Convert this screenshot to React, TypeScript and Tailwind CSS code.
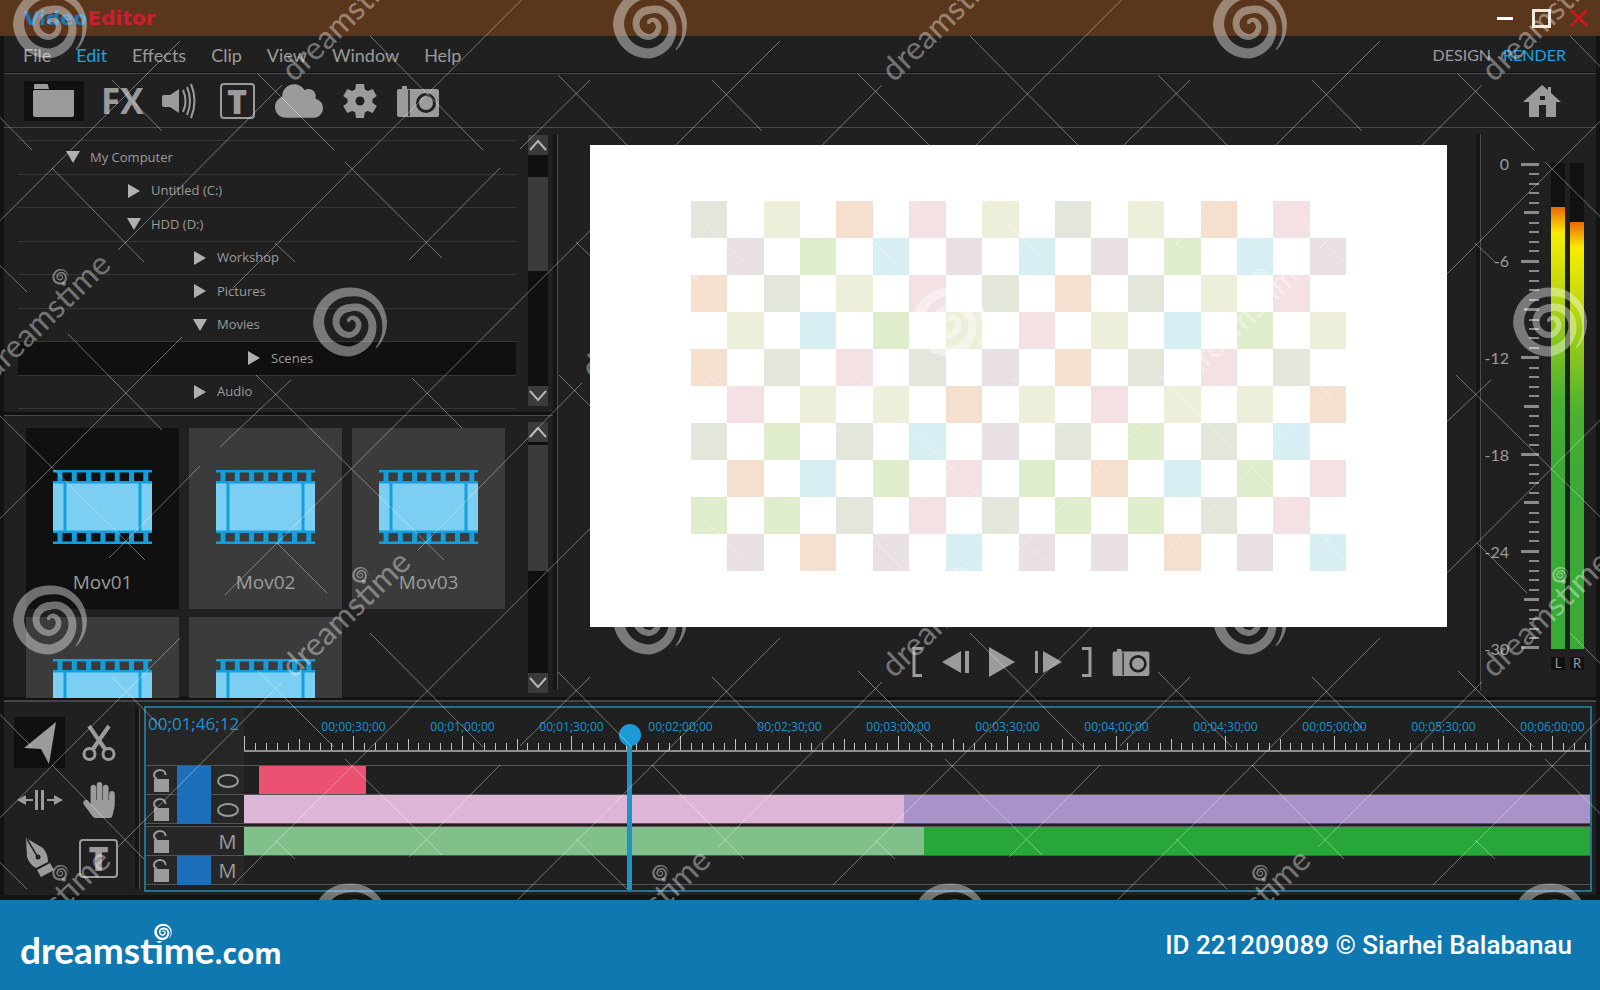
import { ReactNode } from "react";
import { FaCloud, FaHandPaper } from "react-icons/fa";

type Dir = "up" | "down";

const menu = ["File", "Edit", "Effects", "Clip", "View", "Window", "Help"];

const tree = [
  { label: "My Computer", pad: "pl-12", open: true },
  { label: "Untitled (C:)", pad: "pl-[109px]" },
  { label: "HDD (D:)", pad: "pl-[109px]", open: true },
  { label: "Workshop", pad: "pl-[175px]" },
  { label: "Pictures", pad: "pl-[175px]" },
  { label: "Movies", pad: "pl-[175px]", open: true },
  { label: "Scenes", pad: "pl-[229px]", active: true },
  { label: "Audio", pad: "pl-[175px]" },
];

const clips = ["Mov01", "Mov02", "Mov03", "", ""];

const swatch: Record<string, string> = {
  G: "bg-[#e3e6db]",
  Y: "bg-[#eeefdb]",
  O: "bg-[#f5e0cf]",
  P: "bg-[#f4e1e3]",
  M: "bg-[#e9e0e4]",
  L: "bg-[#e0edcc]",
  C: "bg-[#d7eff2]",
};

const board = [
  "GYOPYGYOP",
  "MLCMCMLCM",
  "OGYPGOGYP",
  "YCLYPYCLY",
  "OGPGMOGPG",
  "PYYOYPYYO",
  "GLGCMGLGC",
  "OCLPLOCLP",
  "LLGPGLLGP",
  "MOMCMMOMC",
];

const times = [
  "00;00;30;00",
  "00;01;00;00",
  "00;01;30;00",
  "00;02;00;00",
  "00;02;30;00",
  "00;03;00;00",
  "00;03;30;00",
  "00;04;00;00",
  "00;04;30;00",
  "00;05;00;00",
  "00;05;30;00",
  "00;06;00;00",
];

const levels = ["0", "-6", "-12", "-18", "-24", "-30"];

const range = (n: number) => Array.from({ length: n }, (_, i) => i);

// centre-line radius and width of the swirl, one entry per quarter turn
const swirl = [
  [34.5, 5], [30, 9], [31.5, 11], [29.5, 10], [22, 8], [14, 8], [14, 7], [13, 6], [8, 6], [3, 5], [1, 3],
];

function swirlPath() {
  const outer: string[] = [];
  const inner: string[] = [];
  for (let t = -0.5; t <= 10; t += 0.1) {
    const k = Math.max(0, Math.min(9, Math.floor(t)));
    const f = t - k;
    const r = swirl[k][0] + (swirl[k + 1][0] - swirl[k][0]) * f;
    const w = t < 0 ? 5 + t * 8 : swirl[k][1] + (swirl[k + 1][1] - swirl[k][1]) * f;
    const a = (-t * Math.PI) / 2;
    outer.push(`${((r + w / 2) * Math.cos(a)).toFixed(1)} ${((r + w / 2) * Math.sin(a)).toFixed(1)}`);
    inner.unshift(`${((r - w / 2) * Math.cos(a)).toFixed(1)} ${((r - w / 2) * Math.sin(a)).toFixed(1)}`);
  }
  return `M${outer.join("L")}L${inner.join("L")}Z`;
}

const SWIRL = swirlPath();

const hatch =
  "M225 595L780 41M233 885L782 337M118 250L282 85M409 260L500 168M520 149L590 80M418 550L582 383M109 558L200 466M220 447L291 380" +
  "M112 80L162 131M258 74L334 150M370 36L483 150M-42 75L32 150M52 168L144 262M345 162L442 258M275 243L295 262M-24 242L27 292" +
  "M68 334L162 430M256 375L444 560M412 378L462 428M559 375L745 560M277 543L327 593";

function Overlay() {
  return (
    <svg className="pointer-events-none absolute inset-0 h-full w-full" aria-hidden="true">
      {range(5).map((c) =>
        range(4).map((r) => (
          <path key={`${c}-${r}`} d={hatch} transform={`translate(${(c - 1) * 600} ${(r - 1) * 597})`} stroke="#fff" strokeOpacity=".38" fill="none" />
        ))
      )}
      {range(8).map((c) =>
        range(4)
          .filter((r) => (c + r) % 2 === 1)
          .map((r) => (
            <g key={`${c}-${r}`} transform={`translate(${(c - 1) * 300 + 50} ${r * 298 + 24})`} fill="#fff" fillOpacity=".4">
              <path d={SWIRL} />
              <g transform="translate(244 59) rotate(-44)">
                <text fontSize="32" className="font-['Lato',sans-serif]">dreamstime</text>
                <path d={SWIRL} transform="translate(120 -29) scale(.22)" />
              </g>
            </g>
          ))
      )}
    </svg>
  );
}

function Camera({ className }: { className: string }) {
  return (
    <svg viewBox="0 0 42 32" className={className} fill="currentColor">
      <path d="M2 4h3V1h5v3h30q2 0 2 2v24q0 2-2 2H2q-2 0-2-2V6q0-2 2-2z" />
      <path d="M12 5v26" stroke="#202020" strokeWidth="1.5" />
      <circle cx="29" cy="18" r="8.5" fill="none" stroke="#202020" strokeWidth="3" />
    </svg>
  );
}

function TextBox({ className }: { className: string }) {
  return (
    <span className={`flex items-center justify-center rounded-sm border-2 border-[#9b9b9b] font-['Open_Sans',sans-serif] font-extrabold leading-none ${className}`}>
      T
    </span>
  );
}

function Film() {
  return (
    <svg viewBox="0 0 99 74" className="h-[74px] w-[99px] shrink-0">
      <path d="M0 12h99v50H0z" fill="#7ccff2" />
      <path d="M0 0h99v2.500H0zM0 11h99v2.500H0zM0 60.500h99v2.500H0zM0 71.500h99v2.500H0zM10.500 12h3v50h-3zM85.500 12h3v50h-3z" fill="#129fdb" />
      {range(7).map((i) => (
        <path key={i} d={`M${4.5 + i * 14.3} 1h5v11h-5zM${4.5 + i * 14.3} 61h5v12h-5z`} fill="#129fdb" />
      ))}
    </svg>
  );
}

function Lock() {
  return (
    <svg viewBox="0 0 16 23" className="h-[23px] w-4 text-[#9b9b9b]" fill="none">
      <path d="M1 10h15v13H1z" fill="currentColor" />
      <path d="M4 10C1.500 9 1 8 1 6C1 3 4 1 7 1s5.500 2 5.500 5" stroke="currentColor" strokeWidth="2" />
    </svg>
  );
}

function ScrollButton({ dir }: { dir: Dir }) {
  return (
    <button aria-label={`Scroll ${dir}`} className="flex h-5 w-5 shrink-0 items-center justify-center bg-[#3a3a3a]">
      <svg viewBox="0 0 18 12" className="h-3 w-[18px]" fill="none" stroke="#b5b5b5" strokeWidth="2">
        <path d={dir === "up" ? "M1 11l8-9 8 9" : "M1 1l8 9 8-9"} />
      </svg>
    </button>
  );
}

function Scrollbar({ thumb }: { thumb: string }) {
  return (
    <div className="flex w-5 flex-col bg-[#101010]">
      <ScrollButton dir="up" />
      <div className="flex-1">
        <div className={`bg-[#3b3b3b] ${thumb}`} />
      </div>
      <ScrollButton dir="down" />
    </div>
  );
}

function TitleBar() {
  return (
    <header className="flex h-9 items-center justify-between bg-[#5a371c] pl-6 pr-3">
      <h1 className="font-['DejaVu_Sans',sans-serif] text-xl font-bold leading-none text-[#1d75bc]">
        Video<span className="text-[#cb1f30]">Editor</span>
      </h1>
      <div className="flex items-center gap-[19px]">
        <button aria-label="Minimize" className="h-[3px] w-4 bg-white" />
        <button aria-label="Maximize" className="h-[19px] w-[19px] border-[3px] border-[#f0e8e0]" />
        <button aria-label="Close" className="text-[#d3151c]">
          <svg viewBox="0 0 18 18" className="h-[18px] w-[18px]" stroke="currentColor" strokeWidth="2.5">
            <path d="M1 1l16 16M17 1L1 17" />
          </svg>
        </button>
      </div>
    </header>
  );
}

function MenuBar() {
  return (
    <nav className="flex h-[37px] items-center justify-between pl-[19px] pr-5 font-['Lato',sans-serif] text-lg leading-none shadow-[inset_0_-1px_0_#101010]">
      <div className="flex gap-[25px]">
        {menu.map((m) => (
          <a key={m} href="#" className={m === "Edit" ? "text-[#1aa0e3]" : ""}>{m}</a>
        ))}
      </div>
      <div className="flex gap-3 pr-[10px] text-base leading-none">
        <a href="#">DESIGN</a>
        <a href="#" className="text-[#1aa0e3]">RENDER</a>
      </div>
    </nav>
  );
}

function Toolbar() {
  return (
    <div className="flex h-[55px] items-center border-y border-[#4a4a4a] pl-5 pr-[35px]">
      <button aria-label="Files" className="flex h-10 w-[60px] items-center justify-center bg-[#101010]">
        <svg viewBox="0 0 42 33" className="h-[33px] w-[42px]" fill="currentColor">
          <path d="M1 5V1q0-1 1-1h12q1 0 1 1l1 4zM1 6h40v25q0 2-2 2H2q-2 0-2-2V7z" />
        </svg>
      </button>
      <button className="ml-[17px] font-['Open_Sans',sans-serif] text-[35px] font-bold leading-none">FX</button>
      <button aria-label="Sound" className="ml-[18px]">
        <svg viewBox="0 0 34 36" className="h-9 w-[34px]" fill="currentColor">
          <path d="M0 14q0-2 2-2h6l9-6v24l-9-6H2q-2 0-2-2z" />
          <path d="M21 7q5 11 0 22M25 4q6 14 0 28M29 1q7 17 0 34" fill="none" stroke="currentColor" strokeWidth="2" />
        </svg>
      </button>
      <button aria-label="Text" className="ml-6">
        <TextBox className="h-9 w-[35px] text-[34px]" />
      </button>
      <button aria-label="Cloud" className="ml-5">
        <FaCloud className="h-12 w-12" />
      </button>
      <button aria-label="Settings" className="ml-5">
        <svg viewBox="-17 -17 34 34" className="h-[34px] w-[34px]" fill="currentColor">
          {range(6).map((i) => (
            <path key={i} d="M-4-17h8l1 7H-5z" transform={`rotate(${i * 60})`} />
          ))}
          <circle r="12.5" />
          <circle r="4.5" fill="#202020" />
        </svg>
      </button>
      <button aria-label="Snapshot" className="ml-5">
        <Camera className="h-8 w-[42px]" />
      </button>
      <button aria-label="Home" className="ml-auto">
        <svg viewBox="0 0 38 32" className="h-8 w-[38px]" fill="currentColor">
          <path fillRule="evenodd" d="M19 0l6 5V2h3v6l10 9h-5v15H23V20h-7v12H6V17H0zM17 11v4h5v-4z" />
        </svg>
      </button>
    </div>
  );
}

function Tree() {
  return (
    <div className="flex h-[288px] justify-between border-b border-[#4a4a4a] pb-[9px] pl-[14px] pr-[5px] pt-[7px] shadow-[inset_0_-3px_0_#111]">
      <ul className="mt-[5px] flex h-[269px] w-[498px] flex-col border-t border-[#363636] font-['Open_Sans',sans-serif] text-[13px]">
        {tree.map((t) => (
          <li key={t.label} className={`flex flex-1 border-b border-[#363636] ${t.active ? "bg-[#101010]" : ""}`}>
            <button className={`flex w-full items-center gap-[10px] ${t.pad}`}>
              <svg viewBox="0 0 14 14" className="h-[14px] w-[14px]" fill="#b0b0b0">
                <path d={t.open ? "M0 1h14L7 13z" : "M1 0v14l12-7z"} />
              </svg>
              {t.label}
            </button>
          </li>
        ))}
      </ul>
      <Scrollbar thumb="mt-[22px] h-[94px]" />
    </div>
  );
}

function Bin() {
  return (
    <div className="flex h-[280px] justify-between pl-[22px] pr-[5px]">
      <div className="mt-3 grid h-[270px] grid-cols-3 content-start gap-x-[10px] gap-y-2 overflow-hidden font-['Open_Sans',sans-serif] text-[19px]">
        {clips.map((c, i) => (
          <button key={i} aria-label={c || "Untitled clip"} className={`flex h-[181px] w-[153px] flex-col items-center justify-start pt-[42px] ${i === 0 ? "bg-[#101010]" : "bg-[#3b3b3b]"}`}>
            <Film />
            <span className="mt-6">{c}</span>
          </button>
        ))}
      </div>
      <div className="flex pb-[3px] pt-[6px]">
        <Scrollbar thumb="mt-[3px] h-[126px]" />
      </div>
    </div>
  );
}

function Preview() {
  return (
    <section className="flex flex-1 flex-col items-center pl-8 pr-[29px] pt-[17px]">
      <div className="flex h-[482px] w-full items-center justify-center bg-white">
        <div className="w-[76.5%]">
          {board.map((row, r) => (
            <div key={r} className="grid h-[37px] grid-cols-18">
              {range(18).map((c) => (
                <div key={c} className={c % 2 === r % 2 ? swatch[row[Math.floor(c / 2)]] : ""} />
              ))}
            </div>
          ))}
        </div>
      </div>
      <div className="mt-5 flex items-center gap-5 pl-6">
        <button aria-label="Mark in">
          <svg viewBox="0 0 10 30" className="h-[30px] w-[10px]" fill="none" stroke="currentColor" strokeWidth="3">
            <path d="M10 1.500H2v27h8" />
          </svg>
        </button>
        <button aria-label="Step back">
          <svg viewBox="0 0 27 22" className="h-[22px] w-[27px]" fill="currentColor">
            <path d="M19 0v22L0 11zM23 0h4v22h-4z" />
          </svg>
        </button>
        <button aria-label="Play">
          <svg viewBox="0 0 26 30" className="h-[30px] w-[26px]" fill="currentColor">
            <path d="M0 0v30l26-15z" />
          </svg>
        </button>
        <button aria-label="Step forward">
          <svg viewBox="0 0 27 22" className="h-[22px] w-[27px]" fill="currentColor">
            <path d="M0 0h3v22H0zM8 0v22l19-11z" />
          </svg>
        </button>
        <button aria-label="Mark out">
          <svg viewBox="0 0 10 30" className="h-[30px] w-[10px]" fill="none" stroke="currentColor" strokeWidth="3">
            <path d="M0 1.500h8v27H0" />
          </svg>
        </button>
        <button aria-label="Grab frame">
          <Camera className="h-7 w-[38px]" />
        </button>
      </div>
    </section>
  );
}

function Channel({ top }: { top: string }) {
  return (
    <div className="flex w-[14px] flex-col">
      <div className={`bg-[#111] ${top}`} />
      <div className="flex-1 bg-[linear-gradient(180deg,#ec6608_0px,#f9ed00_26px,#4bb22f_190px,#39aa35_260px)]" />
    </div>
  );
}

function Meter() {
  return (
    <section className="flex w-[115px] shrink-0 gap-3 pt-[35px] font-['Lato',sans-serif]">
      <div className="-mt-2 flex h-[503px] w-7 flex-col justify-between text-right text-base leading-[18px]">
        {levels.map((l) => (
          <span key={l}>{l}</span>
        ))}
      </div>
      <div className="flex h-[487px] w-[18px] flex-col items-end justify-between">
        {range(51).map((i) => (
          <div key={i} className={i % 10 === 0 ? "h-[3px] w-[18px] bg-[#8a8a8a]" : i % 5 === 0 ? "h-[3px] w-[15px] bg-[#8a8a8a]" : "h-[2px] w-[10px] bg-[#8a8a8a]"} />
        ))}
      </div>
      <div>
        <div className="flex h-[486px] gap-[5px]">
          <Channel top="h-11" />
          <Channel top="h-[59px]" />
        </div>
        <div className="mt-2 flex gap-[5px] text-center text-[13px] leading-none">
          <span className="w-[14px] bg-[#111]">L</span>
          <span className="w-[14px] bg-[#111]">R</span>
        </div>
      </div>
    </section>
  );
}

function Divider() {
  return <div className="my-[6px] w-[5px] shrink-0 border-r border-[#4d4d4d] bg-[#151515]" />;
}

function Tools() {
  return (
    <div className="grid w-[131px] shrink-0 grid-cols-2 grid-rows-3 items-center justify-items-center pb-2 pl-[6px] pr-[7px] pt-3">
      <button aria-label="Select" className="flex h-[51px] w-[51px] items-center justify-center bg-[#101010]">
        <svg viewBox="0 0 32 42" className="h-[42px] w-8" fill="currentColor">
          <path d="M32 0l-7 42-8-15-17-1z" />
        </svg>
      </button>
      <button aria-label="Cut">
        <svg viewBox="0 0 34 38" className="h-[38px] w-[34px]" fill="none" stroke="currentColor">
          <circle cx="7.5" cy="30" r="5.5" strokeWidth="3" />
          <circle cx="26.5" cy="30" r="5.5" strokeWidth="3" />
          <path d="M11 25L27 2M23 25L7 2" strokeWidth="4" />
        </svg>
      </button>
      <button aria-label="Slip">
        <svg viewBox="0 0 46 20" className="h-5 w-[46px]" fill="currentColor">
          <path d="M0 10l9-5v4h7v2H9v4zM46 10L37 5v4h-7v2h7v4zM18 0h3v20h-3zM24 0h3v20h-3z" />
        </svg>
      </button>
      <button aria-label="Hand">
        <FaHandPaper className="h-9 w-8" />
      </button>
      <button aria-label="Pen">
        <svg viewBox="0 0 30 40" className="h-10 w-[30px]" fill="currentColor">
          <path d="M1 0l17 10q5 6 5 14l-12 6q-7-4-9-11zM12 32l13-7 4 7-13 7z" />
          <path d="M2 1l10 17" stroke="#202020" strokeWidth="1.5" />
          <circle cx="13" cy="19" r="2.5" fill="#202020" />
        </svg>
      </button>
      <button aria-label="Type">
        <TextBox className="h-[39px] w-[39px] text-[34px]" />
      </button>
    </div>
  );
}

function Track({ mark, target, children }: { mark: ReactNode; target: boolean; children?: ReactNode }) {
  return (
    <div className="flex h-[29px]">
      <div className="flex w-[98px] shrink-0 items-center bg-[#272727] pl-[7px] shadow-[inset_0_-1px_0_#555]">
        <Lock />
        <div className={`ml-2 h-full w-[34px] ${target ? "bg-[#1c70bb]" : ""}`} />
        <div className="flex flex-1 justify-center">{mark}</div>
      </div>
      <div className="flex flex-1 border-b border-[#555]">{children}</div>
    </div>
  );
}

const eye = <span className="h-[14px] w-[22px] rounded-[50%] border-2 border-[#9b9b9b]" />;
const mute = <button className="font-['Open_Sans',sans-serif] text-xl leading-none">M</button>;

function Timeline() {
  return (
    <section className="relative mb-[3px] ml-1 mr-1 mt-1 min-w-0 flex-1 border-2 border-[#26708c]">
      <div className="flex h-[57px] font-['Open_Sans',sans-serif] text-[#1c93cf]">
        <div className="w-[98px] shrink-0 bg-[#262626] pl-[2px] pt-1 text-[17px] leading-6">00;01;46;12</div>
        <div className="min-w-0 flex-1 overflow-hidden">
          <div className="flex pl-[55px] pt-[11px] text-xs leading-4">
            {times.map((t) => (
              <span key={t} className="w-[109px] shrink-0 text-center">{t}</span>
            ))}
          </div>
          <div className="mt-px flex h-4 border-b-2 border-[#8f8f8f]">
            {range(13).map((s) => (
              <div key={s} className="flex w-[109px] shrink-0 items-end">
                {range(10).map((i) => (
                  <div key={i} className={`flex-1 border-l border-[#c4c4c4] ${i === 0 ? "h-full" : i === 5 ? "h-[11px]" : "h-[7px]"}`} />
                ))}
              </div>
            ))}
          </div>
        </div>
      </div>
      <div className="border-t border-[#555]">
        <Track target mark={eye}>
          <div className="ml-[15px] w-[107px] bg-[#eb5272]" />
        </Track>
        <Track target mark={eye}>
          <div className="w-[49%] bg-[#ddb6d7]" />
          <div className="flex-1 bg-[#a992c9]" />
        </Track>
        <div className="h-[3px] border-b border-[#555]" />
        <Track target={false} mark={mute}>
          <div className="w-[50.5%] bg-[#80c18b]" />
          <div className="flex-1 bg-[#28a638]" />
        </Track>
        <Track target mark={mute} />
      </div>
      <div className="absolute bottom-0 left-[33.5%] top-[16px] flex w-[22px] -translate-x-1/2 flex-col items-center">
        <div className="h-[22px] w-[22px] rounded-full bg-[#1c9ad6]" />
        <div className="w-[5px] flex-1 bg-[#1c93c9]" />
      </div>
    </section>
  );
}

export default function App() {
  return (
    <div className="bg-[#0f78b0] text-[#9b9b9b]">
      <div className="relative overflow-hidden bg-[#131313]">
        <TitleBar />
        <div className="mx-1 bg-[#202020]">
          <MenuBar />
          <Toolbar />
          <div className="flex border-b-2 border-[#454545] pb-1 shadow-[inset_0_-3px_0_#111]">
            <div className="w-[549px] shrink-0">
              <Tree />
              <Bin />
            </div>
            <Divider />
            <Preview />
            <Divider />
            <Meter />
          </div>
          <div className="flex h-[193px]">
            <Tools />
            <Divider />
            <Timeline />
          </div>
        </div>
        <div className="h-[5px]" />
        <Overlay />
      </div>
      <footer className="flex h-[90px] items-center justify-between pl-5 pr-7 text-white">
        <a href="#" className="relative pt-2 font-['Lato',sans-serif] text-[37px] font-bold leading-none">
          dreamstime<span className="font-['Open_Sans',sans-serif] text-[28px]">.com</span>
          <svg viewBox="-38 -38 76 76" className="absolute top-0 left-[134px] h-[18px] w-[18px] bg-[#0f78b0]" fill="currentColor">
            <path d={SWIRL} />
          </svg>
        </a>
        <p className="font-['Roboto',sans-serif] text-[26px] font-medium">ID 221209089 © Siarhei Balabanau</p>
      </footer>
    </div>
  );
}
